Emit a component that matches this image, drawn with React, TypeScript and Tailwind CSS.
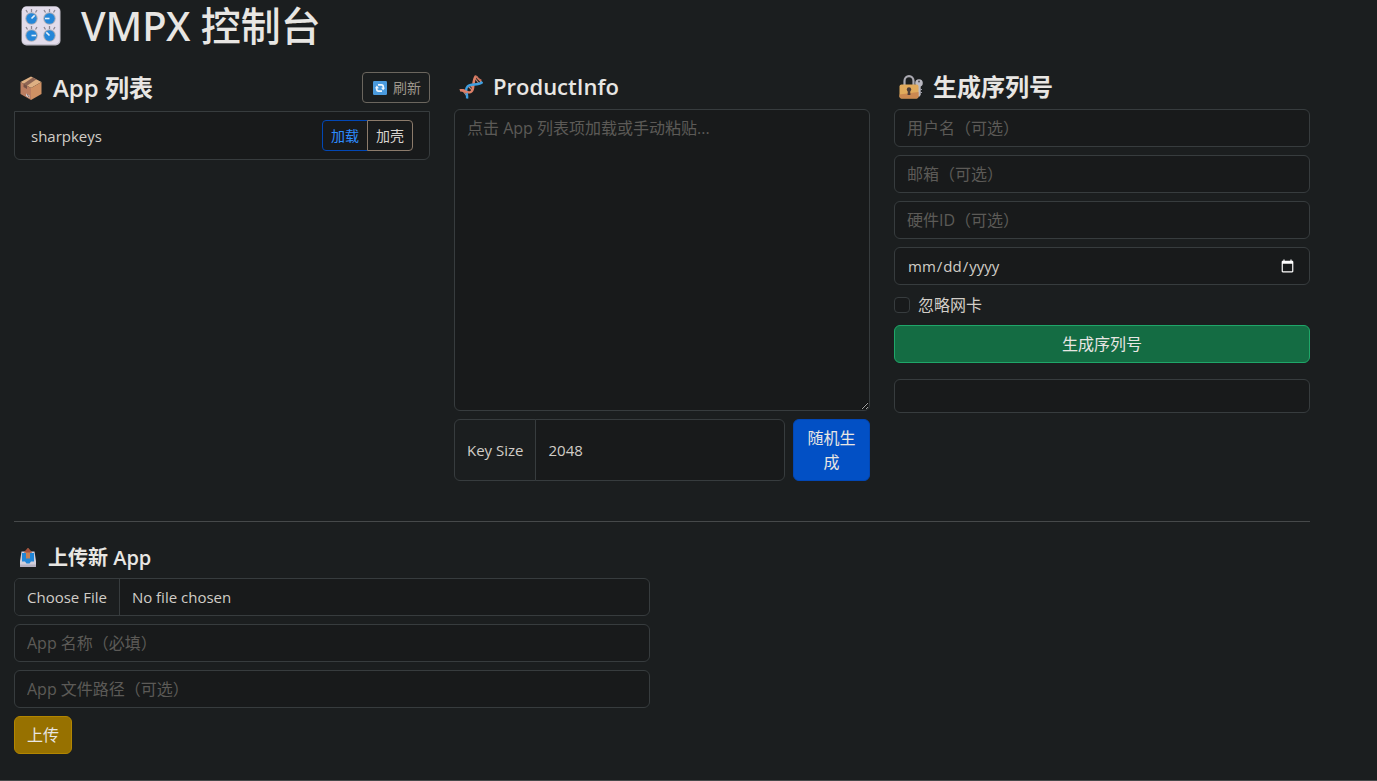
import type { InputHTMLAttributes, ReactNode } from "react";

const field =
  "block w-full h-[38px] rounded-md border border-[#373c3e] bg-[#181a1b] px-3 leading-6 text-[#d1cdc7] placeholder:text-[#5c5a57] outline-none focus:border-[#0250c5]";

function TextField({ label, ...props }: { label: string } & InputHTMLAttributes<HTMLInputElement>) {
  return <input type="text" aria-label={label} placeholder={label} className={field} {...props} />;
}

function Knob({ x, y, angle }: { x: number; y: number; angle: number }) {
  return (
    <g transform={`translate(${x} ${y})`}>
      <path d="M-4-6-5.500-8.500M0-6.600V-9.400M4-6 5.500-8.500" stroke="#8b8792" strokeWidth="1.3" />
      <circle r="6.2" fill="#a9adb8" />
      <circle r="5.2" fill="#2486d8" />
      <path d="M0 0H4.5" stroke="#e8f2fb" strokeWidth="1.6" transform={`rotate(${angle})`} />
    </g>
  );
}

function KnobsIcon() {
  return (
    <svg viewBox="0 0 40 40" className="size-10 shrink-0" aria-hidden="true">
      <rect x="0.5" y="0.5" width="39" height="39" rx="5" fill="#c3bfca" />
      <rect x="1" y="0.5" width="37.5" height="37.5" rx="4.5" fill="#e2dceb" />
      <Knob x={10.5} y={12.5} angle={-45} />
      <Knob x={28.5} y={12.5} angle={180} />
      <Knob x={10.5} y={29.5} angle={0} />
      <Knob x={28.5} y={29.5} angle={225} />
    </svg>
  );
}

function BoxIcon() {
  return (
    <svg viewBox="0 0 24 24" className="size-6 shrink-0" aria-hidden="true">
      <path d="M12 .5 22.5 6 12 12 1.5 6Z" fill="#deb083" />
      <path d="M1.5 6 12 12V24L1.5 18Z" fill="#bc7f62" />
      <path d="M22.5 6 12 12V24L22.5 18Z" fill="#cf9164" />
      <path d="M13.8 1.4 4.5 7.7 8 9.7 17.4 3.3Z" fill="#8e6554" />
      <path d="M4.5 7.7 8 9.7V13L4.5 11Z" fill="#765246" />
      <path d="M7 17.5 10.5 19.5V22L7 20Z" fill="#ddd0ce" />
      <path d="m8 18 2 3" stroke="#806a68" />
    </svg>
  );
}

function DnaIcon() {
  return (
    <svg viewBox="0 0 24 24" className="size-6 shrink-0" fill="none" aria-hidden="true">
      <path d="M3.500 15.500 7.500 20.500M5.500 15 8.500 18M9.500 11.500 13 15M11.500 10.500 14 13M16.500 4 20 8.500M17.500 1.500 22.500 7.500" stroke="#c98a78" strokeWidth="1.200" />
      <path d="M1 15.500C5 13.500 9 20 12.500 16.500S12.500 7 17 .8" stroke="#dd8068" strokeWidth="2.400" />
      <path d="M17 .8C18 3 20.500 5 22.500 5.500" stroke="#c9715c" strokeWidth="1.600" />
      <path d="M8 23.500C9 18.500 5 15.500 8.500 11.500S18.500 11.500 23.500 7" stroke="#3f9fe0" strokeWidth="2.400" />
      <path d="M1 15.500C3.500 14.500 6 16.500 8.500 17.500" stroke="#dd8068" strokeWidth="2.400" />
    </svg>
  );
}

function LockIcon() {
  return (
    <svg viewBox="0 0 24 24" className="size-6 shrink-0" fill="none" aria-hidden="true">
      <path d="M5.500 11V6a4.500 4.800 0 0 1 9 0V11" stroke="#aaa9b1" strokeWidth="2.200" />
      <circle cx="20" cy="8" r="3.800" fill="#b9b8c1" />
      <path d="M18.300 10.500H21.700V20L20 22 18.300 20Z" fill="#b9b8c1" />
      <circle cx="20" cy="6.500" r="1" fill="#4e4c52" />
      <path d="M21.500 14.500H23M21.500 17.500H23" stroke="#9e9da8" />
      <rect x="0.500" y="9.500" width="19" height="14" rx="2" fill="#e0aa5c" />
      <path d="M.5 19.500 19.500 17V21.500a2 2 0 0 1-2 2H2.500a2 2 0 0 1-2-2Z" fill="#cb8850" />
      <circle cx="10" cy="14.500" r="2.200" fill="#493b39" />
      <path d="M9 15H11L11.500 20H8.500Z" fill="#493b39" />
    </svg>
  );
}

function RefreshIcon() {
  return (
    <svg viewBox="0 0 14 14" className="size-3.5 shrink-0" fill="none" aria-hidden="true">
      <rect width="14" height="14" rx="1.200" fill="#4a9add" />
      <path d="M5 3.800H8.500Q10.300 3.800 10.300 6V7.500" stroke="#edf5fc" strokeWidth="1.700" />
      <path d="M9 10.200H5.500Q3.700 10.200 3.700 8V6.500" stroke="#edf5fc" strokeWidth="1.700" />
      <path d="M8 6.800H12L10.200 9.300Z" fill="#edf5fc" />
      <path d="M2 7.200H6L3.800 4.500Z" fill="#edf5fc" />
    </svg>
  );
}

function OutboxIcon() {
  return (
    <svg viewBox="0 0 16 20" className="h-5 w-4 shrink-0" aria-hidden="true">
      <path d="M1.500 3.500H14.500L16 13V18a1 1 0 0 1-1 1H1a1 1 0 0 1-1-1V13Z" fill="#d0cedb" />
      <path d="M2 5H14V13.500H11L9.500 15.500H6.500L5 13.500H2Z" fill="#2186d7" />
      <path d="M0 16.500H16V18a1 1 0 0 1-1 1H1a1 1 0 0 1-1-1Z" fill="#b5b1c2" />
      <path d="M8 0 12 4.500H10V10.500H6V4.500H4Z" fill="#c88055" />
      <path d="M8 0 12 4.500H4Z" fill="#a9513c" />
    </svg>
  );
}

function Heading({ icon, children }: { icon: ReactNode; children: ReactNode }) {
  return (
    <h2 className="flex items-center gap-2.5 pl-[5px] text-2xl leading-[29px] font-semibold text-[#e8e6e3]">
      {icon}
      {children}
    </h2>
  );
}

export default function App() {
  return (
    <div className="min-h-screen border-b border-[#46494a] bg-[#1b1e1f] pb-6 font-['Open_Sans','Noto_Sans_CJK_SC',sans-serif] text-[16px] leading-6 text-[#d1cdc7]">
      <main className="ml-3.5 max-w-[1296px]">
        <h1 className="mb-6 flex items-center gap-5 pt-1 pl-[7px] font-['Noto_Sans','Noto_Sans_CJK_SC',sans-serif] text-[40px] leading-[44px] font-medium text-[#e8e6e3]">
          <KnobsIcon />
          VMPX 控制台
        </h1>

        <div className="grid grid-cols-3 items-start gap-6">
          <section>
            <div className="mb-2 flex items-center justify-between">
              <Heading icon={<BoxIcon />}>App 列表</Heading>
              <button className="flex h-[31px] items-center gap-1.5 rounded border border-[#6b665e] pr-2 pl-2.5 text-sm text-[#9e978c]">
                <RefreshIcon />
                刷新
              </button>
            </div>
            <ul>
              <li className="flex items-center justify-between rounded-b-md border border-[#373c3e] bg-[#181a1b] px-4 py-2">
                <span className="text-[15px]">sharpkeys</span>
                <div className="flex text-sm">
                  <button className="h-[31px] rounded-l border border-[#0247b5] px-2 text-[#2d8cff]">加载</button>
                  <button className="-ml-px h-[31px] rounded-r border border-[#8c7b6b] px-2 text-[#d8d4cf]">加壳</button>
                </div>
              </li>
            </ul>
          </section>

          <section>
            <div className="mb-2">
              <Heading icon={<DnaIcon />}>
                <span className="text-[22px]">ProductInfo</span>
              </Heading>
            </div>
            <textarea
              aria-label="ProductInfo"
              placeholder="点击 App 列表项加载或手动粘贴..."
              className="block h-[302px] w-full resize-y rounded-md border border-[#373c3e] bg-[#181a1b] px-3 py-1.5 text-[#d1cdc7] scheme-dark outline-none placeholder:text-[#5c5a57]"
            />
            <div className="mt-2 flex gap-2">
              <div className="flex min-w-0 flex-1 text-[15px]">
                <label
                  htmlFor="key-size"
                  className="flex shrink-0 items-center rounded-l-md border border-[#373c3e] px-3"
                >
                  Key Size
                </label>
                <input
                  id="key-size"
                  defaultValue="2048"
                  className="-ml-px w-full min-w-0 rounded-r-md border border-[#373c3e] bg-[#181a1b] px-3 outline-none"
                />
              </div>
              <button className="w-[77px] shrink-0 rounded-md border border-[#0247b5] bg-[#0250c5] px-3 py-1.5 text-[#e8e6e3]">
                随机生成
              </button>
            </div>
          </section>

          <section>
            <div className="mb-2">
              <Heading icon={<LockIcon />}>生成序列号</Heading>
            </div>
            <form className="flex flex-col gap-2" onSubmit={(e) => e.preventDefault()}>
              <TextField label="用户名（可选）" />
              <TextField label="邮箱（可选）" />
              <TextField label="硬件ID（可选）" />
              <div className="text-[15px]">
                <input type="date" lang="en-US" aria-label="到期日期" className={`${field} scheme-dark`} />
              </div>
              <label className="flex items-center gap-2">
                <input
                  type="checkbox"
                  className="size-4 appearance-none rounded border border-[#373c3e] bg-[#181a1b] checked:bg-[#0250c5]"
                />
                忽略网卡
              </label>
              <button className="h-[38px] rounded-md border border-[#1fa769] bg-[#146c43] text-[#e8e6e3]">
                生成序列号
              </button>
              <output className="mt-2 block min-h-[34px] rounded-md border border-[#373c3e] bg-[#181a1b] p-2" />
            </form>
          </section>
        </div>

        <hr className="mt-10 mb-6 border-[#46494a]" />

        <section className="grid grid-cols-2 gap-6">
          <form className="flex flex-col items-start gap-2" onSubmit={(e) => e.preventDefault()}>
            <h2 className="flex items-center gap-3 pl-1.5 text-xl leading-6 font-semibold text-[#e8e6e3]">
              <OutboxIcon />
              上传新 App
            </h2>
            <input
              type="file"
              aria-label="App 文件"
              className="block h-[38px] w-full rounded-md border border-[#373c3e] bg-[#181a1b] text-[15px] leading-6 file:mr-3 file:h-9 file:border-r file:border-[#373c3e] file:bg-[#1b1e1f] file:px-3 file:text-[#d1cdc7]"
            />
            <TextField label="App 名称（必填）" />
            <TextField label="App 文件路径（可选）" />
            <button className="h-[38px] rounded-md border border-[#b38600] bg-[#977100] px-3 text-[#e8e6e3]">
              上传
            </button>
          </form>
        </section>
      </main>
    </div>
  );
}
